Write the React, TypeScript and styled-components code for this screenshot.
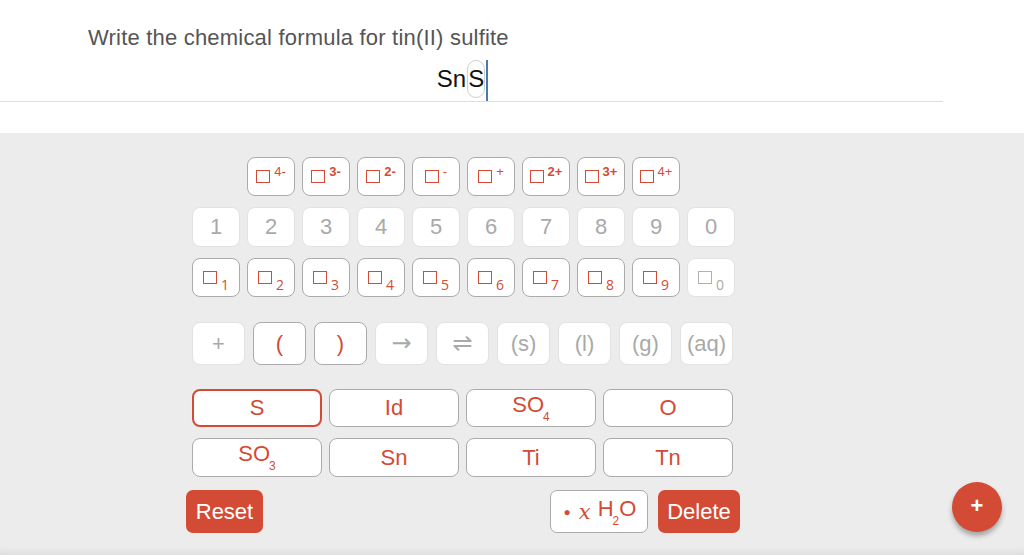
import React from 'react';
import styled, { createGlobalStyle, css } from 'styled-components';

const RED = '#d34b35';

const GlobalStyle = createGlobalStyle`
  html, body {
    margin: 0;
    padding: 0;
    background: #ffffff;
    font-family: "Liberation Sans", Arial, sans-serif;
  }
`;

const Page = styled.div`
  width: 1024px;
  height: 555px;
  display: flex;
  flex-direction: column;
  overflow: hidden;
`;

const Header = styled.div`
  background: #fff;
  padding-top: 27px;
  padding-bottom: 31px;
`;

const Question = styled.div`
  margin-left: 88px;
  font-size: 22px;
  line-height: 1;
  color: #555555;
  letter-spacing: 0.2px;
`;

const AnswerLine = styled.div`
  margin-top: 11px;
  width: 943px;
  height: 42px;
  box-sizing: border-box;
  border-bottom: 1px solid #dddddd;
  padding: 0 18px 3px 0;
  display: flex;
  align-items: center;
  justify-content: center;
  font-size: 24px;
  line-height: 1;
  color: #111;
`;

const SelectedAtom = styled.span`
  display: inline-flex;
  align-items: center;
  justify-content: center;
  height: 36px;
  margin-left: 1px;
  border: 1px solid #cfcfcf;
  border-radius: 9px;
`;

const Cursor = styled.span`
  align-self: stretch;
  width: 2px;
  margin: 0 0 -3px 1px;
  background: #4a78b4;
`;

const Panel = styled.div`
  position: relative;
  flex: 1;
  background: #ececec;
  padding: 24px 0 13px 192px;
  box-shadow: inset 0 -9px 6px -6px #dcdcdc;
`;

const Keypad = styled.div`
  width: 542px;
  display: flex;
  flex-direction: column;
`;

const KeyGroup = styled.div<{ $top?: number; $gap?: number }>`
  display: flex;
  flex-direction: column;
  gap: ${(p) => p.$gap ?? 11}px;
  margin-top: ${(p) => p.$top ?? 0}px;
`;

const KeyRow = styled.div<{ $cols: number; $w: number; $gap: number; $h: number }>`
  display: grid;
  grid-template-columns: repeat(${(p) => p.$cols}, ${(p) => p.$w}px);
  column-gap: ${(p) => p.$gap}px;
  grid-auto-rows: ${(p) => p.$h}px;
`;

const Key = styled.button<{ $disabled?: boolean; $selected?: boolean; $col?: number }>`
  box-sizing: border-box;
  margin: 0;
  padding: 0;
  display: flex;
  align-items: center;
  justify-content: center;
  background: #fff;
  border-radius: 8px;
  font-family: "Liberation Sans", Arial, sans-serif;
  font-size: 22px;
  line-height: 1;
  cursor: pointer;
  ${(p) => p.$col && css`grid-column: ${p.$col};`}
  ${(p) =>
    p.$disabled
      ? css`
          color: #a9a9a9;
          border: 1px solid #e2e2e2;
        `
      : css`
          color: ${RED};
          border: 1px solid #ababab;
        `}
  ${(p) =>
    p.$selected &&
    css`
      border: 2px solid ${RED};
    `}
`;

const Arrow = styled.span`
  font-family: "DejaVu Sans", sans-serif;
  font-size: 24px;
  line-height: 1;
  margin-top: -2px;
`;

const Box = styled.span<{ $disabled?: boolean }>`
  display: inline-block;
  box-sizing: border-box;
  width: 14px;
  height: 13px;
  border: 1.6px solid ${(p) => (p.$disabled ? '#b0b0b0' : RED)};
`;

const Sup = styled.span<{ $bold?: boolean }>`
  align-self: flex-start;
  margin: 7px 0 0 4px;
  font-size: 13px;
  font-weight: ${(p) => (p.$bold ? 700 : 400)};
`;

const SubDigit = styled.span`
  margin: 14px 0 0 4px;
  font-family: "Open Sans", "Liberation Sans", sans-serif;
  font-size: 14px;
`;

const BoxWrap = styled.span`
  display: flex;
  align-items: center;
  height: 100%;
`;

const Sub = styled.sub`
  font-size: 12px;
  vertical-align: -9px;
  margin-left: -1px;
`;

const BottomRow = styled.div`
  margin: 13px -6px 0 -6px;
  display: flex;
  align-items: center;
  justify-content: space-between;
  height: 43px;
`;

const RightGroup = styled.div`
  display: flex;
  gap: 10px;
  height: 100%;
`;

const FilledButton = styled.button<{ $w: number }>`
  width: ${(p) => p.$w}px;
  height: 43px;
  border: none;
  border-radius: 7px;
  background: ${RED};
  color: #fff;
  font-family: "Liberation Sans", Arial, sans-serif;
  font-size: 22px;
  padding: 0;
  cursor: pointer;
`;

const OutlineButton = styled.button`
  box-sizing: border-box;
  width: 98px;
  height: 43px;
  border: 1px solid #ababab;
  border-radius: 7px;
  background: #fff;
  color: ${RED};
  display: flex;
  align-items: center;
  justify-content: center;
  font-family: "Liberation Sans", Arial, sans-serif;
  font-size: 22px;
  padding: 0 0 0 2px;
  cursor: pointer;
`;

const Dot = styled.span`
  font-size: 12px;
  margin-right: 8px;
`;

const MathX = styled.span`
  font-family: "DejaVu Serif", "Liberation Serif", serif;
  font-style: italic;
  font-size: 21px;
  margin-right: 7px;
`;

const Fab = styled.button`
  position: absolute;
  right: 22px;
  bottom: 23px;
  width: 50px;
  height: 50px;
  border-radius: 50%;
  border: none;
  background: ${RED};
  color: #fff;
  font-family: "Liberation Sans", Arial, sans-serif;
  font-size: 22px;
  font-weight: 700;
  line-height: 1;
  padding: 0 0 2px 0;
  box-shadow: 0 4px 5px rgba(0, 0, 0, 0.3);
  cursor: pointer;
`;

const charges = [
  { t: '4-', b: false },
  { t: '3-', b: true },
  { t: '2-', b: true },
  { t: '-', b: false },
  { t: '+', b: false },
  { t: '2+', b: true },
  { t: '3+', b: true },
  { t: '4+', b: false },
];

const digits = ['1', '2', '3', '4', '5', '6', '7', '8', '9', '0'];

const symbols = [
  { t: '+', d: true },
  { t: '(', d: false },
  { t: ')', d: false },
  { t: '→', d: true, arrow: true },
  { t: '⇌', d: true, arrow: true },
  { t: '(s)', d: true },
  { t: '(l)', d: true },
  { t: '(g)', d: true },
  { t: '(aq)', d: true },
];

const elements: { t: string; sub?: string; selected?: boolean }[] = [
  { t: 'S', selected: true },
  { t: 'Id' },
  { t: 'SO', sub: '4' },
  { t: 'O' },
  { t: 'SO', sub: '3' },
  { t: 'Sn' },
  { t: 'Ti' },
  { t: 'Tn' },
];

export default function App() {
  return (
    <Page>
      <GlobalStyle />
      <Header>
        <Question>Write the chemical formula for tin(II) sulfite</Question>
        <AnswerLine>
          <span>Sn</span>
          <SelectedAtom>S</SelectedAtom>
          <Cursor />
        </AnswerLine>
      </Header>

      <Panel>
        <Keypad>
          <KeyGroup>
            <KeyRow $cols={10} $w={48} $gap={7} $h={39}>
              {charges.map((c, i) => (
                <Key key={c.t} $col={i + 2}>
                  <BoxWrap>
                    <Box />
                    <Sup $bold={c.b}>{c.t}</Sup>
                  </BoxWrap>
                </Key>
              ))}
            </KeyRow>
            <KeyRow $cols={10} $w={48} $gap={7} $h={40}>
              {digits.map((d) => (
                <Key key={d} $disabled>
                  {d}
                </Key>
              ))}
            </KeyRow>
            <KeyRow $cols={10} $w={48} $gap={7} $h={39}>
              {digits.map((d) => (
                <Key key={d} $disabled={d === '0'}>
                  <BoxWrap>
                    <Box $disabled={d === '0'} />
                    <SubDigit>{d}</SubDigit>
                  </BoxWrap>
                </Key>
              ))}
            </KeyRow>
          </KeyGroup>

          <KeyGroup $top={25}>
            <KeyRow $cols={9} $w={53} $gap={8} $h={43}>
              {symbols.map((s) => (
                <Key key={s.t} $disabled={s.d}>
                  {s.arrow ? <Arrow>{s.t}</Arrow> : s.t}
                </Key>
              ))}
            </KeyRow>
          </KeyGroup>

          <KeyGroup $top={24}>
            <KeyRow $cols={4} $w={130} $gap={7} $h={38}>
              {elements.slice(0, 4).map((e, i) => (
                <Key key={i} $selected={e.selected}>
                  <span>
                    {e.t}
                    {e.sub && <Sub>{e.sub}</Sub>}
                  </span>
                </Key>
              ))}
            </KeyRow>
            <KeyRow $cols={4} $w={130} $gap={7} $h={39}>
              {elements.slice(4).map((e, i) => (
                <Key key={i} $selected={e.selected}>
                  <span>
                    {e.t}
                    {e.sub && <Sub>{e.sub}</Sub>}
                  </span>
                </Key>
              ))}
            </KeyRow>
          </KeyGroup>

          <BottomRow>
            <FilledButton $w={77}>Reset</FilledButton>
            <RightGroup>
              <OutlineButton>
                <Dot>●</Dot>
                <MathX>x</MathX>
                <span>
                  H<Sub>2</Sub>O
                </span>
              </OutlineButton>
              <FilledButton $w={82}>Delete</FilledButton>
            </RightGroup>
          </BottomRow>
        </Keypad>
        <Fab>+</Fab>
      </Panel>
    </Page>
  );
}
